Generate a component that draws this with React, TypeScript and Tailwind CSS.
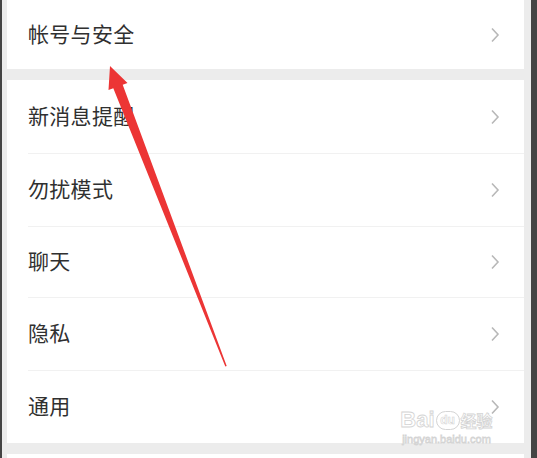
const Chevron = () => (
  <svg width="10" height="16" viewBox="0 0 10 16" className="shrink-0">
    <polyline points="2,1.5 8,8 2,14.5" fill="none" stroke="#b8b8b8" strokeWidth="1.6" />
  </svg>
);

const Row = ({ label, h = "h-[73px]", divider = false }: { label: string; h?: string; divider?: boolean }) => (
  <div className="relative">
    {divider && <div className="ml-[21px] h-px bg-[#f1f1f1]" />}
    <div className={`${h} flex items-center justify-between pl-[21px] pr-[24px]`}>
      <span className="-mt-[2px] text-[21px] text-[#303030] tracking-[0.3px]">{label}</span>
      <Chevron />
    </div>
  </div>
);

export default function App() {
  return (
    <div
      className="relative w-[537px] h-[458px] overflow-hidden flex bg-[#ececec]"
      style={{ fontFamily: '"Noto Sans CJK SC", "Noto Sans", sans-serif' }}
    >
      <div className="w-[2px] bg-[#444]" />
      <div className="flex-1 flex flex-col pl-[5px] pr-[7px]">
        <div className="bg-white">
          <Row label="帐号与安全" h="h-[69px]" />
        </div>
        <div className="h-[11px]" />
        <div className="bg-white">
          <Row label="新消息提醒" />
          <Row label="勿扰模式" h="h-[72px]" divider />
          <Row label="聊天" h="h-[70px]" divider />
          <Row label="隐私" h="h-[72px]" divider />
          <Row label="通用" h="h-[72px]" divider />
        </div>
        <div className="h-[11px]" />
        <div className="bg-white flex-1" />
      </div>
      <div className="w-[6px] bg-[#444]" />

      {/* watermark */}
      <div className="absolute left-[400px] top-[409px] w-[93px] flex flex-col items-center text-white [-webkit-text-stroke:0.8px_#d4d4d4]">
        <div className="flex items-center gap-[1px] leading-none">
          <span className="text-[22px] font-bold" style={{ fontFamily: '"Liberation Sans", sans-serif' }}>Bai</span>
          <span className="flex h-[19px] w-[24px] items-center justify-center rounded-full border border-[#d4d4d4] text-[12px] font-bold [-webkit-text-stroke:0.6px_#d4d4d4]" style={{ fontFamily: '"Liberation Sans", sans-serif' }}>du</span>
          <span className="text-[16px] font-bold">经验</span>
        </div>
        <span className="mt-[3px] text-[11px] leading-none" style={{ fontFamily: '"Liberation Sans", sans-serif' }}>jingyan.baidu.com</span>
      </div>

      {/* red arrow */}
      <svg className="absolute left-0 top-0 pointer-events-none" width="537" height="458">
        <polygon
          points="110,66 127.5,83 122.7,84.7 226.7,366 225.3,366.4 113.3,88.3 108.5,90"
          fill="#ec3535"
        />
      </svg>
    </div>
  );
}
